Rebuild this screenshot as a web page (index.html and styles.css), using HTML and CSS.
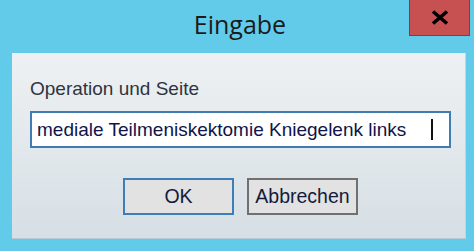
FILE: index.html
```html
<!DOCTYPE html>
<html lang="de">
<head>
<meta charset="utf-8">
<title>Eingabe</title>
<link rel="stylesheet" href="styles.css">
</head>
<body>
<div class="window">
  <div class="titlebar">
    <div class="spacer"></div>
    <div class="title">Eingabe</div>
    <button class="close" aria-label="Schließen">
      <svg width="18" height="15" viewBox="0 0 18 15"><path d="M2 1.5 L16 13.5 M16 1.5 L2 13.5" stroke="#000" stroke-width="3.6" stroke-linecap="butt"/></svg>
    </button>
  </div>
  <div class="client">
    <div class="label">Operation und Seite</div>
    <div class="textbox"><span class="value">mediale Teilmeniskektomie Kniegelenk links</span><span class="caret"></span></div>
    <div class="buttons">
      <button class="btn default">OK</button>
      <button class="btn">Abbrechen</button>
    </div>
  </div>
</div>
</body>
</html>
```
FILE: styles.css
```css
html, body {
  margin: 0;
  padding: 0;
}
body {
  width: 474px;
  height: 251px;
  overflow: hidden;
  background: #62cbea;
}
.window {
  display: flex;
  flex-direction: column;
  height: 251px;
}
.titlebar {
  height: 53px;
  display: grid;
  grid-template-columns: 1fr auto 1fr;
}
.title {
  font-family: "Open Sans", "Noto Sans", sans-serif;
  font-size: 25px;
  color: #1b1b1b;
  padding-top: 7px;
  line-height: 34px;
  padding-left: 6px;
}
.close {
  justify-self: end;
  align-self: start;
  margin-right: 4px;
  width: 61px;
  height: 36px;
  padding: 0;
  border: 1px solid #8e3b2f;
  border-top: none;
  background: #c75050;
  display: flex;
  align-items: center;
  justify-content: center;
}
.close svg {
  display: block;
}
.client {
  margin: 0 8px 12px 12px;
  flex: 1;
  background: linear-gradient(#eef1f3, #d6dfe5);
  border-right: 1px solid #c5d3dc;
  border-bottom: 1px solid #b9cad5;
  padding: 24px 14px 0 18px;
  font-family: "Liberation Sans", Arial, sans-serif;
}
.label {
  font-size: 19px;
  line-height: 24px;
  color: #2e3440;
  margin-bottom: 10px;
}
.textbox {
  height: 33px;
  border: 2px solid #3f7cb2;
  background: #fff;
  display: flex;
  align-items: center;
  padding-left: 5px;
}
.value {
  font-size: 19px;
  color: #10144a;
  white-space: nowrap;
  flex: 1;
}
.caret {
  width: 2px;
  height: 21px;
  background: #111;
  margin-right: 16px;
}
.buttons {
  display: flex;
  justify-content: center;
  gap: 13px;
  margin-top: 30px;
}
.btn {
  width: 111px;
  height: 37px;
  background: #e2e2e2;
  border: 2px solid #707070;
  font-family: "Liberation Sans", Arial, sans-serif;
  font-size: 19.5px;
  color: #151a3c;
  padding: 0;
}
.btn.default {
  border-color: #3c7fb8;
}
```
